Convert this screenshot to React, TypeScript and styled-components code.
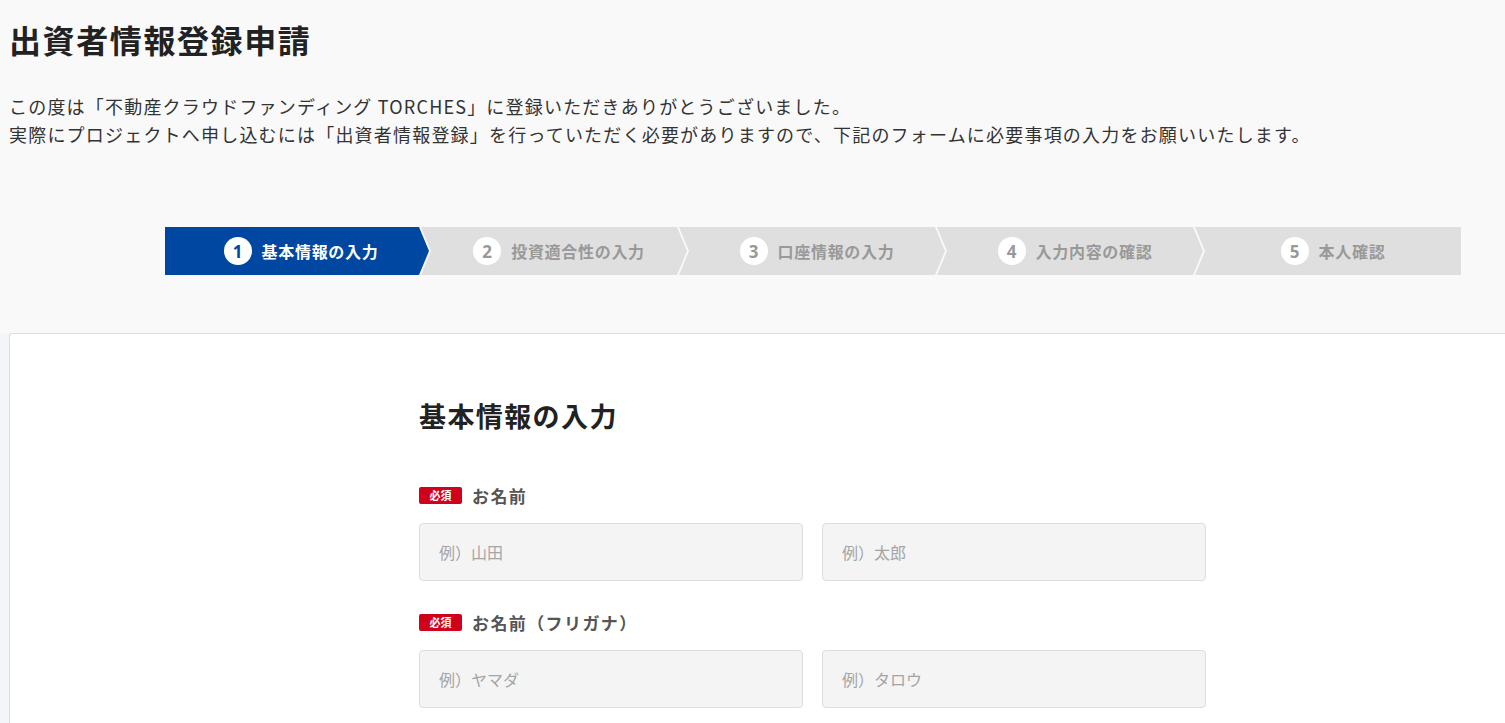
import styled, { createGlobalStyle } from "styled-components";

const GlobalStyle = createGlobalStyle`
	html, body {
		margin: 0;
		padding: 0;
		background-color: #f4f5f9;
		font-family: "Noto Sans CJK JP", "Noto Sans", sans-serif;
		color: #333;
	}
	* {
		box-sizing: border-box;
	}
`;

const Header = styled.header`
	background-color: #f9f9f9;
	padding: 16px 9px 0;
	height: 333px;
`;

const Title = styled.h1`
	margin: 0;
	font-size: 32px;
	font-weight: 700;
	letter-spacing: 1.6px;
	line-height: 46px;
	color: #222;
`;

const Lead = styled.p`
	margin: 30px 0 0;
	font-size: 18px;
	line-height: 28px;
	letter-spacing: 1.2px;
	color: #333;
`;

const Steps = styled.ol`
	display: flex;
	width: 1296px;
	height: 48px;
	margin: 79px 0 0 156px;
	padding: 0;
	list-style: none;
`;

const clips = {
	first: "polygon(0 0, calc(100% - 10px) 0, 100% 50%, calc(100% - 10px) 100%, 0 100%)",
	middle:
		"polygon(0 0, calc(100% - 10px) 0, 100% 50%, calc(100% - 10px) 100%, 0 100%, 10px 50%)",
	last: "polygon(0 0, 100% 0, 100% 100%, 0 100%, 10px 50%)",
};

const Step = styled.li<{ $active?: boolean; $pos: "first" | "middle" | "last" }>`
	flex: 1;
	display: flex;
	align-items: center;
	justify-content: center;
	gap: 10px;
	margin-left: ${(p) => (p.$pos === "first" ? "0" : "-8px")};
	padding-left: ${(p) => (p.$pos === "first" ? "8px" : "10px")};
	clip-path: ${(p) => clips[p.$pos]};
	background-color: ${(p) => (p.$active ? "#0047a1" : "#dfdfdf")};
	color: ${(p) => (p.$active ? "#fff" : "#999")};
	font-size: 16px;
	font-weight: 700;
	letter-spacing: 0.7px;
`;

const StepNum = styled.span<{ $active?: boolean }>`
	display: flex;
	align-items: center;
	justify-content: center;
	width: 28px;
	height: 28px;
	border-radius: 50%;
	background-color: #fff;
	color: ${(p) => (p.$active ? "#0047a1" : "#999")};
	font-family: "Open Sans", "Noto Sans", sans-serif;
	font-size: 17px;
	font-weight: 700;
	letter-spacing: 0;
`;

const Card = styled.main`
	margin-left: 9px;
	min-height: 390px;
	background-color: #fff;
	border-top: 1px solid #dddddd;
	border-left: 1px solid #dddddd;
	border-top-left-radius: 4px;
	padding: 64px 0 0 409px;
`;

const Form = styled.div`
	width: 787px;
`;

const SectionTitle = styled.h2`
	margin: 0 0 48px;
	font-size: 27px;
	font-weight: 700;
	letter-spacing: 1.4px;
	line-height: 36px;
	color: #222;
`;

const Field = styled.div`
	margin-bottom: 28px;
`;

const Label = styled.div`
	display: flex;
	align-items: center;
	gap: 10px;
	height: 26px;
	margin-bottom: 15px;
	font-size: 17px;
	font-weight: 700;
	letter-spacing: 1.4px;
	color: #555;
`;

const Required = styled.span`
	display: inline-flex;
	align-items: center;
	justify-content: center;
	width: 43px;
	height: 17px;
	border-radius: 2px;
	background-color: #d0021b;
	color: #fff;
	font-size: 11px;
	font-weight: 700;
	letter-spacing: 0;
`;

const InputRow = styled.div`
	display: grid;
	grid-template-columns: 384px 384px;
	column-gap: 19px;
`;

const Input = styled.input`
	height: 58px;
	padding: 0 19px;
	border: 1px solid #dddddd;
	border-radius: 4px;
	background-color: #f4f4f4;
	font-family: "Noto Sans CJK JP", "Noto Sans", sans-serif;
	font-size: 16px;
	color: #333;
	outline: none;
	&::placeholder {
		color: #a5a5a5;
	}
`;

const steps = ["基本情報の入力", "投資適合性の入力", "口座情報の入力", "入力内容の確認", "本人確認"];

export default function App() {
	return (
		<>
			<GlobalStyle />
			<Header>
				<Title>出資者情報登録申請</Title>
				<Lead>
					この度は「不動産クラウドファンディング TORCHES」に登録いただきありがとうございました。
					<br />
					実際にプロジェクトへ申し込むには「出資者情報登録」を行っていただく必要がありますので、下記のフォームに必要事項の入力をお願いいたします。
				</Lead>
				<Steps>
					{steps.map((label, i) => (
						<Step
							key={label}
							$active={i === 0}
							$pos={i === 0 ? "first" : i === steps.length - 1 ? "last" : "middle"}
						>
							<StepNum $active={i === 0}>{i + 1}</StepNum>
							{label}
						</Step>
					))}
				</Steps>
			</Header>
			<Card>
				<Form>
					<SectionTitle>基本情報の入力</SectionTitle>
					<Field>
						<Label>
							<Required>必須</Required>
							お名前
						</Label>
						<InputRow>
							<Input placeholder="例）山田" />
							<Input placeholder="例）太郎" />
						</InputRow>
					</Field>
					<Field>
						<Label>
							<Required>必須</Required>
							お名前（フリガナ）
						</Label>
						<InputRow>
							<Input placeholder="例）ヤマダ" />
							<Input placeholder="例）タロウ" />
						</InputRow>
					</Field>
				</Form>
			</Card>
		</>
	);
}
